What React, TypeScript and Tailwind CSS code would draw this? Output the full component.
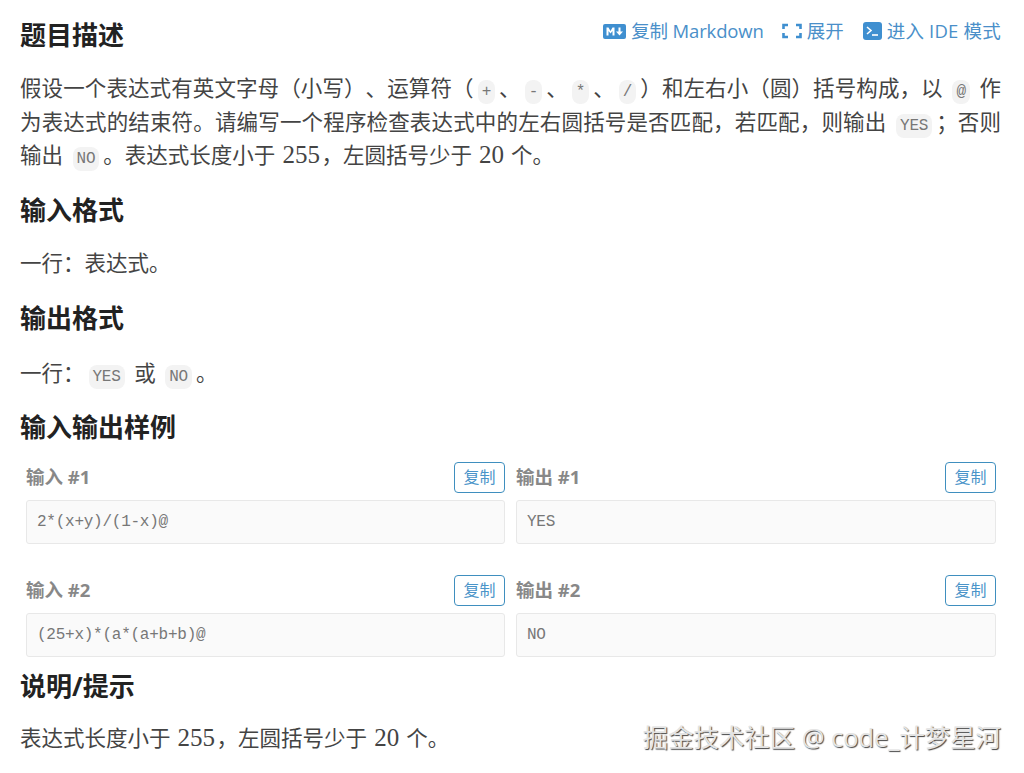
const CJK = "font-['Open_Sans','Noto_Sans_CJK_SC',sans-serif]";

const Code = ({ children }: { children: string }) => (
  <code className="mx-[4px] rounded-[8px] bg-[#f3f3f3] px-[4px] py-[3px] font-['Liberation_Mono','Noto_Sans_CJK_SC',monospace] text-[16px] leading-none tracking-[-0.25px] text-[#777]">
    {children}
  </code>
);

const Num = ({ children }: { children: string }) => (
  <span className="mx-[1.5px] font-['Liberation_Serif',serif] text-[25px] leading-none">{children}</span>
);

const Heading = ({ children, className }: { children: string; className: string }) => (
  <h2 className={`text-[26px] leading-[36px] font-bold text-[#222] ${className}`}>{children}</h2>
);

const Para = ({ children, className }: { children: React.ReactNode; className: string }) => (
  <p className={`text-[21.5px] leading-[33.5px] text-[#444] [text-spacing-trim:space-all] ${className}`}>{children}</p>
);

const MarkdownIcon = () => (
  <svg width="23" height="15" viewBox="0 0 23 15">
    <rect width="23" height="15" rx="2" fill="#3f8fd0" />
    <path d="M3.5 11.5V3.5H5.5L7.5 7L9.5 3.5H11.5V11.5H9.5V7L7.5 9.5L5.5 7V11.5Z" fill="#fff" />
    <path d="M15.5 3.5H17.5V7.5H20L16.5 11.5L13 7.5H15.5Z" fill="#fff" />
  </svg>
);

const ExpandIcon = () => (
  <svg width="20" height="16" viewBox="0 0 20 16" fill="none" stroke="#3f8fd0" strokeWidth="2.6">
    <path d="M6 2H1.5V6M14 2H18.5V6M6 14H1.5V10M14 14H18.5V10" />
  </svg>
);

const TerminalIcon = () => (
  <svg width="19" height="18" viewBox="0 0 19 18">
    <rect width="19" height="18" rx="3" fill="#3f8fd0" />
    <path d="M4 5L8 8.5L4 12" fill="none" stroke="#fff" strokeWidth="1.6" />
    <path d="M9 13H15" stroke="#fff" strokeWidth="1.6" />
  </svg>
);

const Sample = ({ title, value }: { title: string; value: string }) => (
  <div>
    <div className="flex h-[31px] items-center justify-between">
      <span className="text-[18.5px] font-bold text-[#888]">{title}</span>
      <button className="h-[31px] w-[51px] rounded-[4px] border border-[#3f8fbf] text-[16px] text-[#4a94c9]">
        复制
      </button>
    </div>
    <pre className="mt-[7px] h-[44px] rounded-[3px] border border-[#e8e8e8] bg-[#fafafa] pl-[10px] font-['Liberation_Mono','Noto_Sans_CJK_SC',monospace] text-[16px] leading-[42px] tracking-[-0.25px] text-[#777]">
      {value}
    </pre>
  </div>
);

export default function App() {
  return (
    <div className={`relative h-[773px] w-[1024px] overflow-hidden bg-white pr-[23px] pl-[20px] ${CJK}`}>
      <div className="flex items-start justify-between pt-[17px]">
        <Heading className="">题目描述</Heading>
        <div className="flex items-center text-[18.5px] leading-[28px] text-[#4a8fc9]">
          <MarkdownIcon />
          <span className="ml-[5px] tracking-[-0.15px]">复制 Markdown</span>
          <span className="ml-[18px]"><ExpandIcon /></span>
          <span className="ml-[5px]">展开</span>
          <span className="ml-[19px]"><TerminalIcon /></span>
          <span className="ml-[5px] tracking-[0.2px]">进入 IDE 模式</span>
        </div>
      </div>

      <Para className="mt-[18px] text-justify">
        假设一个表达式有英文字母（小写）、运算符（<Code>+</Code>、<Code>-</Code>、<Code>*</Code>、<Code>/</Code>）和左右小（圆）括号构成，以 <Code>@</Code> 作为表达式的结束符。请编写一个程序检查表达式中的左右圆括号是否匹配，若匹配，则输出 <Code>YES</Code>；否则输出 <Code>NO</Code>。表达式长度小于 <Num>255</Num>，左圆括号少于 <Num>20</Num> 个。
      </Para>

      <Heading className="mt-[20px]">输入格式</Heading>
      <Para className="mt-[18px]">一行：表达式。</Para>

      <Heading className="mt-[21px]">输出格式</Heading>
      <Para className="mt-[20px]">
        一行：<Code>YES</Code> 或 <Code>NO</Code>。
      </Para>

      <Heading className="mt-[19px]">输入输出样例</Heading>
      <div className="mt-[17px] grid grid-cols-[479px_480px] gap-x-[11px] gap-y-[31px] pl-[6px]">
        <Sample title="输入 #1" value="2*(x+y)/(1-x)@" />
        <Sample title="输出 #1" value="YES" />
        <Sample title="输入 #2" value="(25+x)*(a*(a+b+b)@" />
        <Sample title="输出 #2" value="NO" />
      </div>

      <Heading className="mt-[11px]">说明/提示</Heading>
      <Para className="mt-[17px]">
        表达式长度小于 <Num>255</Num>，左圆括号少于 <Num>20</Num> 个。
      </Para>

      <div className="absolute top-[721px] right-[23px] text-[25.4px] leading-[32px] text-[#e4e4e4] [text-shadow:1px_1px_1px_#444]">
        掘金技术社区 @ code_计梦星河
      </div>
    </div>
  );
}
